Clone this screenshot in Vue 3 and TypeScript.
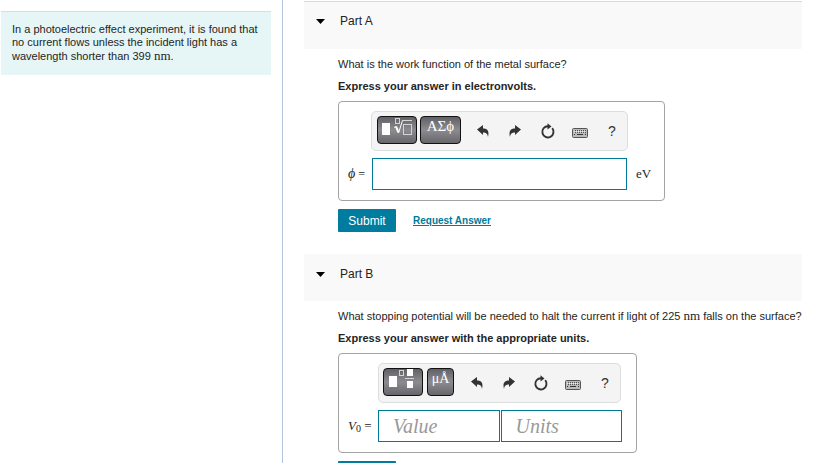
<script setup lang="ts">
import { reactive, ref } from 'vue'

interface Part {
  id: string
  title: string
  instruction: string
  template: 'root' | 'fraction'
  symbols: string
  fields: { name: string; placeholder: string }[]
  unit?: string
}

const parts: Part[] = [
  {
    id: 'a',
    title: 'Part A',
    instruction: 'Express your answer in electronvolts.',
    template: 'root',
    symbols: 'ΑΣϕ',
    fields: [{ name: 'Answer', placeholder: '' }],
    unit: 'eV',
  },
  {
    id: 'b',
    title: 'Part B',
    instruction: 'Express your answer with the appropriate units.',
    template: 'fraction',
    symbols: 'μÅ',
    fields: [
      { name: 'Value', placeholder: 'Value' },
      { name: 'Units', placeholder: 'Units' },
    ],
  },
]

const tools = ['undo', 'redo', 'reset', 'keyboard', 'help']
const open = reactive<Record<string, boolean>>({ a: true, b: true })
const answers = ref<Record<string, string>>({})
</script>

<template>
  <div class="page">
    <aside class="side">
      <p class="intro">
        In a photoelectric effect experiment, it is found that no current flows unless the incident
        light has a wavelength shorter than 399 <span class="math">nm</span>.
      </p>
    </aside>

    <main class="main">
      <section v-for="part in parts" :key="part.id" class="part" :class="`part-${part.id}`">
        <header class="head">
          <button class="toggle" type="button" :aria-expanded="open[part.id]" @click="open[part.id] = !open[part.id]">
            <svg class="caret" viewBox="0 0 9 5" aria-hidden="true"><path d="M0 0H9L4.5 5Z" /></svg>
            <span>{{ part.title }}</span>
          </button>
        </header>

        <div v-if="open[part.id]" class="body">
          <p v-if="part.id === 'a'" class="question">What is the work function of the metal surface?</p>
          <p v-else class="question">
            What stopping potential will be needed to halt the current if light of 225
            <span class="math">nm</span> falls on the surface?
          </p>
          <p class="instruction">{{ part.instruction }}</p>

          <form class="answer" @submit.prevent>
            <div class="panel">
              <div class="toolbar">
                <button class="key wide" type="button" aria-label="Templates">
                  <svg v-if="part.template === 'root'" viewBox="0 0 38 26" aria-hidden="true">
                    <rect x="4" y="6" width="8" height="12" fill="#fff" />
                    <rect x="17.500" y="1.500" width="4" height="5" class="line" />
                    <path d="M16 10.500L18 9.500" class="line bright" />
                    <path d="M18 9.500L20.500 15.500" class="line thick" />
                    <path d="M20.500 16L24.500 3.500" class="line bright" />
                    <path d="M24 3.500H34" class="line" />
                    <rect x="25.500" y="7.500" width="8" height="10" class="line" />
                  </svg>
                  <svg v-else viewBox="0 0 38 26" aria-hidden="true">
                    <rect x="5" y="7" width="8" height="11" fill="#fff" />
                    <rect x="15.500" y="1.500" width="4" height="5" class="line" />
                    <rect x="23" y="0" width="6" height="7" fill="#fff" />
                    <path d="M21 9.500H30" class="line" />
                    <rect x="23" y="12" width="6" height="7" fill="#fff" />
                  </svg>
                </button>
                <button class="key symbols" type="button">{{ part.symbols }}</button>
                <div class="tools">
                  <button v-for="tool in tools" :key="tool" class="tool" type="button" :aria-label="tool">
                    <svg v-if="tool === 'undo'" viewBox="0 0 18 18" aria-hidden="true">
                      <path d="M9 3V6.500C13.500 6.500 15.500 9 14 15C13.500 11.500 12 10.500 9 10.500V13L3 7.500Z" fill="#333" />
                    </svg>
                    <svg v-else-if="tool === 'redo'" viewBox="0 0 18 18" aria-hidden="true">
                      <path d="M9 3V6.500C4.500 6.500 2.500 9 4 15C4.500 11.500 6 10.500 9 10.500V13L15 7.500Z" fill="#333" />
                    </svg>
                    <svg v-else-if="tool === 'reset'" viewBox="0 0 18 18" aria-hidden="true">
                      <path d="M13.200 6.200A5.600 5.600 0 1 1 9 4.200" fill="none" stroke="#333" stroke-width="1.900" />
                      <path d="M8.500 1.200L12.500 4.400L8.500 7.400Z" fill="#333" />
                    </svg>
                    <svg v-else-if="tool === 'keyboard'" viewBox="0 0 18 18" aria-hidden="true">
                      <rect x="1.500" y="6.500" width="15" height="9" rx="1" fill="#ddd" stroke="#555" />
                      <rect x="2.500" y="7.500" width="13" height="7" fill="#bbb" stroke="#bbb" />
                      <path d="M4 8.500H15M4 10.500H15" stroke="#555" stroke-dasharray="1 1" />
                      <path d="M3 9.500H15" stroke="#eee" stroke-dasharray="1 1" />
                      <path d="M3 12.500H4M6 12.500H12M14 12.500H15" stroke="#333" />
                    </svg>
                    <span v-else>?</span>
                  </button>
                </div>
              </div>
              <div class="label">
                <template v-if="part.id === 'a'"><i class="phi">ϕ</i> =</template>
                <template v-else><i>V</i><sub>0</sub> =</template>
              </div>
              <div class="fields">
                <input
                  v-for="field in part.fields"
                  :key="field.name"
                  v-model="answers[part.id + field.name]"
                  type="text"
                  :aria-label="field.name"
                  :placeholder="field.placeholder"
                />
              </div>
              <span v-if="part.unit" class="unit">{{ part.unit }}</span>
            </div>
            <div class="actions">
              <button class="submit" type="submit">Submit</button>
              <a class="request" href="#">Request Answer</a>
            </div>
          </form>
        </div>
      </section>
    </main>
  </div>
</template>

<style>
body {
  margin: 0;
  background: #fff;
}
</style>

<style scoped>
.page {
  display: grid;
  grid-template-columns: 282px minmax(0, 1fr);
  min-height: 100vh;
  color: #252525;
  font: 11px/14px "Liberation Sans", Arial, sans-serif;
}
p {
  margin: 0;
}
button,
input {
  box-sizing: border-box;
  margin: 0;
  padding: 0;
  font-family: inherit;
}
.side {
  padding: 11px 11px 0 1px;
}
.intro {
  padding: 11px 11px 12px;
  border-top: 1px solid #d9dfdf;
  background: #e6f6f7;
  line-height: 13px;
}
.math,
.unit,
.label {
  font-family: "Liberation Serif", "Times New Roman", serif;
  font-size: 13px;
}
.math {
  line-height: 1;
}
.main {
  padding: 1px 28px 0 21px;
  border-left: 1px solid #b3c5da;
}
.head {
  height: 47px;
  border-top: 1px solid #f9f9f9;
  background: #f9f9f9;
}
.part-a .head {
  border-top-color: #d9dcdc;
}
.part-b .head {
  height: 46px;
}
.toggle {
  display: flex;
  align-items: center;
  gap: 15px;
  padding: 11px 12px;
  border: 0;
  background: none;
  color: #222;
  font-size: 12px;
  line-height: 16px;
}
.caret {
  width: 9px;
  height: 5px;
}
.body {
  padding: 8px 0 0 34px;
}
.question {
  white-space: nowrap;
}
.instruction {
  margin: 8px 0;
  font-weight: bold;
}
.panel {
  display: grid;
  grid-template-columns: 32px 257px auto;
  grid-template-rows: 40px 32px;
  row-gap: 7px;
  align-items: center;
  box-sizing: border-box;
  width: fit-content;
  height: 100px;
  padding: 9px 13px 9px 0;
  border: 1px solid #a3a3a3;
  border-radius: 4px;
}
.part-b .panel {
  grid-template-columns: 39px 244px;
  padding-right: 14px;
}
.toolbar {
  display: flex;
  grid-column: 2;
  gap: 3px;
  box-sizing: border-box;
  height: 40px;
  padding: 4px 6px 4px 5px;
  border: 1px solid #ddd;
  border-radius: 5px;
  background: #f4f4f4;
}
.part-b .toolbar {
  gap: 4px;
  padding-left: 4px;
  margin-right: 1px;
}
.key {
  width: 27px;
  height: 28px;
  border: 1px solid #111;
  border-radius: 4px;
  background: linear-gradient(#606065, #8b8b90 50%, #67676b);
  color: #fff;
  font: 14px/19px "Liberation Serif", "Times New Roman", serif;
  display: flex;
  justify-content: center;
}
.key.wide {
  width: 40px;
}
.part-a .symbols {
  width: 41px;
  font-size: 15px;
}
.key svg {
  width: 38px;
  height: 26px;
}
.line {
  fill: none;
  stroke: #d4d4d6;
}
.bright {
  stroke: #fff;
}
.thick {
  stroke: #fff;
  stroke-width: 2;
}
.tools {
  display: flex;
  flex: 1;
  justify-content: space-between;
  margin: 6px 0 0 10px;
}
.tool {
  width: 18px;
  height: 18px;
  border: 0;
  background: none;
  color: #333;
  font-size: 14px;
  line-height: 18px;
}
.tool svg {
  display: block;
  width: 18px;
  height: 18px;
}
.label {
  grid-column: 1;
  padding-left: 9px;
  line-height: 16px;
  white-space: nowrap;
}
.part-a .label {
  font-size: 12px;
}
.phi {
  font-size: 14px;
}
sub {
  font-size: 10px;
  line-height: 1;
  vertical-align: -2px;
}
.fields {
  display: flex;
  gap: 1px;
  padding: 0 1px;
}
.part-b .fields {
  padding: 0;
}
input {
  flex: 1;
  min-width: 0;
  height: 32px;
  padding: 0 14px;
  border: 1px solid #007a99;
  background: #fff;
  font: 20px "Liberation Serif", "Times New Roman", serif;
}
input::placeholder {
  color: #999;
  font-style: italic;
}
.unit {
  padding-left: 8px;
}
.actions {
  display: flex;
  align-items: center;
  gap: 17px;
  padding: 8px 0 22px;
}
.submit {
  width: 58px;
  height: 23px;
  border: 0;
  border-radius: 1px;
  background: #007c9e;
  color: #fff;
  font-size: 12px;
}
.request {
  color: #007a99;
  font-size: 10px;
  font-weight: bold;
}
</style>
